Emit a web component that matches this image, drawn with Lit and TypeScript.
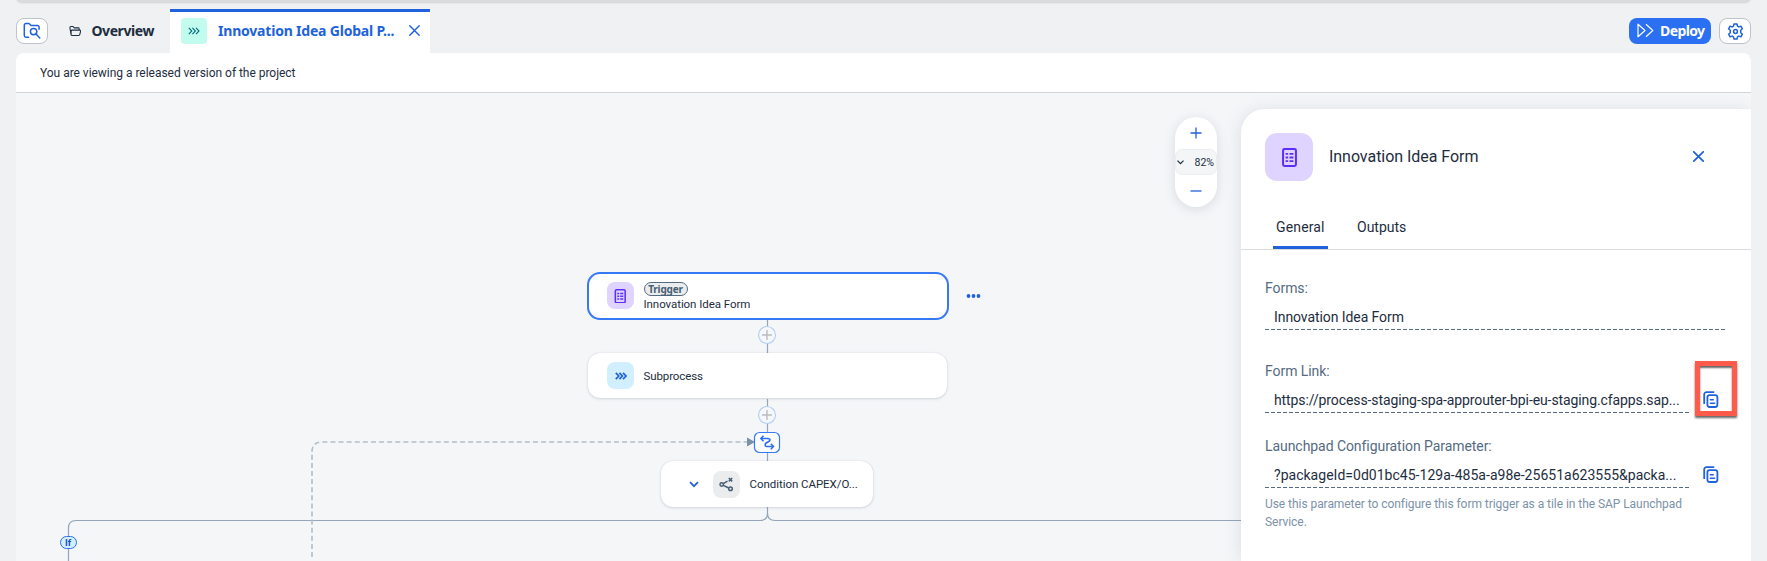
import { LitElement, html, css, svg } from "lit";
import { customElement } from "lit/decorators.js";

const formGlyph = (size: number) => html`<svg width=${size} height=${size} viewBox="0 0 18 18" fill="none" stroke="#5b2eff">
  <rect x="2.9" y="1" width="12.2" height="16" rx="1.4" stroke-width="1.9"/>
  <path d="M5.3 5.6h2.4M5.3 9h2.4M5.3 12.4h2.4M9 5.6h3.7M9 9h3.7M9 12.4h3.7" stroke-width="1.7"/>
</svg>`;
const chevrons = (w: number, sw: number) => html`<svg width=${w} height="8" viewBox="0 0 12 8" fill="none" stroke="currentColor" stroke-width=${sw}>
  <path d="M.8.8 3.8 4 .8 7.2M4.4.8 7.4 4 4.4 7.2M8 .8 11 4 8 7.2"/>
</svg>`;
const copyGlyph = html`<svg width="16" height="17" viewBox="0 0 16 17" fill="none" stroke="#2062dc" stroke-width="1.8" stroke-linecap="round">
  <path d="M1.2 12.2V3.4A2.3 2.3 0 0 1 3.5 1.1H10.6"/>
  <rect x="4.4" y="4.2" width="10" height="11.8" rx="2.2"/>
  <path d="M7.4 8.7h2.8M7.4 12.2h4.200" stroke-width="1.6"/>
</svg>`;
const cross = (s: number, w: number) => html`<svg width=${s} height=${s} viewBox="0 0 10 10" stroke="#2062dc" stroke-width=${w} stroke-linecap="round"><path d="M.7.7 9.3 9.3M9.3.7.7 9.3"/></svg>`;

@customElement("app-toolbar")
class AppToolbar extends LitElement {
  static styles = css`
    :host { display: block; }
    .bar { display: flex; height: 44px; padding: 9px 16px 0; font: 700 14px "Noto Sans", sans-serif; color: #1d2d3e; }
    .btn { display: flex; align-items: center; justify-content: center; box-sizing: border-box; width: 32px; height: 26px; margin-top: 9px; background: #fff; border: 1px solid #bcc3ca; border-radius: 8px; }
    .tab { display: flex; align-items: center; height: 44px; white-space: nowrap; }
    .overview { padding: 0 16px 1px 21px; gap: 9px; box-sizing: border-box; width: 122px; letter-spacing: -.42px; }
    .overview span { padding-left: 1px; }
    .active { box-sizing: border-box; width: 260px; padding: 0 10px 4px 11px; background: #fff; border-top: 3px solid #2062dc; color: #2062dc; letter-spacing: -.2px; }
    .badge { display: flex; align-items: center; justify-content: center; width: 26px; height: 26px; background: #c2fcee; border-radius: 4px; color: #046c7a; margin-right: 11px; }
    .name { width: 179px; margin-right: 12px; }
    .space { flex: 1; }
    .deploy { display: flex; align-items: center; box-sizing: border-box; width: 82px; height: 26px; margin: 9px 8px 0 0; padding: 0 0 1px 8px; gap: 6px; color: #fff; background: #2b6ff2; border-radius: 8px; letter-spacing: -.6px; }
  `;
  render() {
    return html`<div class="bar">
      <div class="btn"><svg width="18" height="18" viewBox="0 0 18 18" fill="none" stroke="#2062dc" stroke-width="1.5" stroke-linecap="round" stroke-linejoin="round">
        <path d="M5.6 15.2H3A1.7 1.7 0 0 1 1.3 13.5V3.2A1.7 1.7 0 0 1 3 1.5H6l2 2h6.4a1.7 1.7 0 0 1 1.7 1.7V7.3"/><circle cx="10.6" cy="9.6" r="3.2"/><path d="M13 12l3.8 4"/></svg></div>
      <div class="tab overview"><svg width="14" height="12" viewBox="0 0 14 12" fill="none" stroke="#1d2d3e" stroke-width="1.2" stroke-linejoin="round">
        <path d="M2.4 10.5 1 2.2Q1 1 2 1H4.6L6 2.5H10.6Q11.4 2.5 11.4 3.3V5M2.4 10.5Q2.6 11 3.4 11H11Q11.9 11 12.1 10.2L13.2 5.9Q13.3 5 12.4 5H3.4Q2.5 5 2.4 6Z"/></svg><span>Overview</span></div>
      <div class="tab active"><span class="badge">${chevrons(12, 1.1)}</span><span class="name">Innovation Idea Global P...</span>${cross(11, 1.3)}</div>
      <div class="space"></div>
      <div class="deploy"><svg width="17" height="15" viewBox="0 0 17 15" fill="none" stroke="#fff" stroke-width="1.2" stroke-linejoin="round"><path d="M1 1.2V13.8L8 7.5ZM9 1.2 15.8 7.5 9 13.8"/></svg><span>Deploy</span></div>
      <div class="btn"><svg width="17" height="17" viewBox="0 0 17 17" fill="none" stroke="#2062dc" stroke-width="1.5" stroke-linejoin="round">
        <path d="M7 1h3l.5 2.2 1.200.7 2.200-.7 1.500 2.600-1.700 1.500v2.400l1.700 1.500-1.500 2.600-2.200-.7-1.200.7L10 16H7l-.5-2.200-1.200-.7-2.200.7-1.500-2.600 1.700-1.500V7.300L1.600 5.800 3.100 3.200l2.200.7 1.200-.7Z"/><circle cx="8.500" cy="8.500" r="1.900"/></svg></div>
    </div>`;
  }
}

@customElement("flow-canvas")
class FlowCanvas extends LitElement {
  static styles = css`
    :host { display: block; position: absolute; inset: 0; font: 11.5px Roboto, sans-serif; color: #1d2d3e; white-space: nowrap; }
    .wires { position: absolute; left: 0; top: 0; }
    .node { position: absolute; display: flex; align-items: center; box-sizing: border-box; background: #fff; border-radius: 12px; box-shadow: 0 0 1px #8a99aa70, 0 1px 3px #556b8235; }
    .trigger { left: 570.5px; top: 178.5px; width: 362.5px; height: 48.5px; border: 2px solid #3579f3; border-radius: 13px; box-shadow: none; padding-left: 18.5px; gap: 9.5px; }
    .sub { left: 572px; top: 260px; width: 359px; height: 45px; padding-left: 19px; gap: 9.5px; letter-spacing: -.1px; }
    .cond { left: 645px; top: 368px; width: 212px; height: 46px; padding-left: 27.5px; letter-spacing: -.05px; }
    .cond .ico { margin: 0 10px 0 14px; }
    .ico { display: flex; align-items: center; justify-content: center; width: 27px; height: 27px; border-radius: 8px; }
    .purple { background: #dfd3ff; }
    .blue { background: #d1efff; color: #2062dc; }
    .gray { background: #eaecee; }
    .stack { display: flex; flex-direction: column; align-items: flex-start; gap: 1px; padding-top: 1px; line-height: 14px; letter-spacing: -.06px; }
    .tag { box-sizing: border-box; height: 14px; width: 44px; text-align: center; border: 1px solid #556b81; border-radius: 7px; background: #eaecee; color: #475e75; font: 700 10px/12px "Noto Sans", sans-serif; letter-spacing: -.2px; }
    .if { position: absolute; left: 43.5px; top: 443px; box-sizing: border-box; width: 17px; height: 13px; border: 1px solid #2f70e6; border-radius: 6.5px; background: #d1efff; color: #1550c0; font: 700 9.5px/11px Roboto, sans-serif; text-align: center; }
    .zoom { position: absolute; left: 1159px; top: 24px; width: 42px; height: 90px; display: flex; flex-direction: column; align-items: center; background: #fff; border-radius: 21px; box-shadow: 0 2px 12px #556b8230; }
    .zb { flex: 1; display: flex; align-items: center; }
    .pct { box-sizing: border-box; width: 42px; height: 26px; display: flex; align-items: center; justify-content: space-between; padding: 1px 2px 0 1px; background: #f4f5f6; border: 1px solid #eceef0; border-radius: 7px; font-size: 10.5px; }
  `;
  plus(y: number) {
    return svg`<circle cx="751" cy=${y} r="8.5" fill="#f5f7fa" stroke="#b5cffb" stroke-width="1.2"/><path d=${`M746 ${y}h10M751 ${y - 5}v10`} stroke="#b9bdc2" stroke-width="1.4"/>`;
  }
  render() {
    return html`
      <svg class="wires" width="1225" height="468" fill="none">
        <g stroke="#94a5b9" stroke-width="1.2">
          <path d="M751.5 227V260M751.5 306V368M751.5 414V420Q751.5 427.5 744 427.5H60Q52.5 427.5 52.5 435V468M751.5 420Q751.5 427.5 759 427.5H1225"/>
        </g>
        <path d="M296 464V359Q296 349 306 349H731" stroke="#b3c0cf" stroke-width="1.7" stroke-dasharray="5 3.1"/>
        <path d="M731 344.5 739 349 731 353.5Z" fill="#7b91a8"/>
        ${this.plus(242)}${this.plus(322)}
        <rect x="738.5" y="339.5" width="25" height="20" rx="5" fill="#fff" stroke="#3579f3" stroke-width="1.2"/>
        <g stroke="#2a6df0" stroke-width="1.6" stroke-linejoin="round"><path d="M745.5 345.5H751.5Q755 345.5 753.5 348L749.5 350.5Q748.500 353.500 751 353.500H757"/><path d="M747.500 342.800 744.800 345.500 747.500 348.200M754.800 350.800 757.500 353.500 754.800 356.200"/></g>
        <g fill="#2062dc"><circle cx="952.5" cy="203" r="1.9"/><circle cx="957.5" cy="203" r="1.9"/><circle cx="962.5" cy="203" r="1.9"/></g>
      </svg>
      <div class="node trigger"><span class="ico purple">${formGlyph(14.5)}</span><div class="stack"><span class="tag">Trigger</span><span>Innovation Idea Form</span></div></div>
      <div class="node sub"><span class="ico blue">${chevrons(12, 1.7)}</span><span>Subprocess</span></div>
      <div class="node cond">
        <svg width="10" height="7" viewBox="0 0 10 7" fill="none" stroke="#2062dc" stroke-width="1.7"><path d="M1 1.2 5 5.2 9 1.2"/></svg>
        <span class="ico gray"><svg width="15" height="15" viewBox="0 0 15 15" fill="none" stroke="#475e75" stroke-width="1.5"><circle cx="2.7" cy="7.5" r="1.7"/><circle cx="11.5" cy="11.8" r="1.8"/><path d="M4.3 6.7 8.5 4.2M4.3 8.3 9.8 11M9.8 1 13.2 4.4M13.2 1 9.8 4.4"/></svg></span>
        <span>Condition CAPEX/O...</span></div>
      <span class="if">If</span>
      <div class="zoom">
        <div class="zb"><svg width="12" height="12" viewBox="0 0 12 12" stroke="#2062dc" stroke-width="1.3"><path d="M.5 6h11M6 .5v11"/></svg></div>
        <div class="pct"><svg width="7" height="5" viewBox="0 0 7 5" fill="none" stroke="#1d2d3e" stroke-width="1.2"><path d="M.5.7 3.5 3.7 6.5.7"/></svg><span>82%</span></div>
        <div class="zb"><svg width="12" height="12" viewBox="0 0 12 12" stroke="#2062dc" stroke-width="1.3"><path d="M.5 6h11"/></svg></div>
      </div>`;
  }
}

@customElement("detail-panel")
class DetailPanel extends LitElement {
  static styles = css`
    :host { display: block; position: relative; box-sizing: border-box; width: 510px; height: 452px; background: #fff; border-top-left-radius: 24px; box-shadow: -2px 0 16px #556b8222; font: 14px Roboto, sans-serif; color: #1d2d3e; white-space: nowrap; }
    .head { display: flex; align-items: center; height: 48px; padding: 24px 47px 0 24px; }
    .head > svg { margin-bottom: 2px; }
    .ico { width: 48px; height: 48px; border-radius: 12px; background: #dfd3ff; display: flex; align-items: center; justify-content: center; }
    .title { flex: 1; font-size: 16px; margin-left: 16px; padding-bottom: 2px; letter-spacing: -.04px; }
    .tabs { display: flex; box-sizing: border-box; height: 69px; padding: 21px 32px 0; gap: 26px; border-bottom: 1px solid #d9dbdd; }
    .tabs span { box-sizing: border-box; height: 47px; padding: 15px 3px 0; line-height: 20px; border-bottom: 3px solid transparent; }
    .tabs .on { width: 55px; border-color: #2062dc; border-radius: 2px 2px 0 0; letter-spacing: .15px; }
    .body { padding: 28px 24px 0; }
    .label { color: #556b82; line-height: 20px; letter-spacing: -.06px; }
    .row { display: flex; align-items: center; height: 32px; margin-top: 3px; }
    .value { box-sizing: border-box; width: 424px; height: 32px; line-height: 32px; padding-left: 9px; letter-spacing: .02px; background: repeating-linear-gradient(90deg, #556b82 0 4px, transparent 4px 6px) 0 28px / 100% 1px no-repeat; }
    .wide { width: 460px; letter-spacing: -.08px; }
    .url { letter-spacing: -.1px; }
    .copy { display: flex; margin: 0 0 1px 14px; }
    .g1 { margin-top: 28px; }
    .g2 { margin-top: 20px; }
    .help { font-size: 12px; line-height: 18px; color: #7c92a9; margin-top: 4px; letter-spacing: -.055px; }
    .mark { position: absolute; left: 454px; top: 252px; box-sizing: border-box; width: 42px; height: 55px; border: 5px solid #ff5a4a; box-shadow: 0 2px 2px #0009, inset 0 2px 2px #0009; }
  `;
  render() {
    return html`
      <div class="head"><span class="ico">${formGlyph(19)}</span><span class="title">Innovation Idea Form</span>${cross(11, 1.6)}</div>
      <div class="tabs"><span class="on">General</span><span>Outputs</span></div>
      <div class="body">
        <div class="label">Forms:</div>
        <div class="row"><div class="value wide">Innovation Idea Form</div></div>
        <div class="label g1">Form Link:</div>
        <div class="row"><div class="value url">https://process-staging-spa-approuter-bpi-eu-staging.cfapps.sap...</div><span class="copy">${copyGlyph}</span></div>
        <div class="label g2">Launchpad Configuration Parameter:</div>
        <div class="row"><div class="value">?packageId=0d01bc45-129a-485a-a98e-25651a623555&amp;packa...</div><span class="copy">${copyGlyph}</span></div>
        <div class="help">Use this parameter to configure this form trigger as a tile in the SAP Launchpad<br>Service.</div>
      </div>
      <div class="mark"></div>`;
  }
}

@customElement("app-root")
class AppRoot extends LitElement {
  static styles = css`
    :host { display: block; box-sizing: border-box; height: 561px; overflow: hidden; background: #eff1f3; position: relative; }
    .shell { position: absolute; left: 16px; right: 16px; top: -8px; height: 10px; background: #d9dbdd; border-radius: 0 0 6px 6px; box-shadow: 0 1px 2px #0002; }
    .note { box-sizing: border-box; height: 40px; margin: 0 16px; padding: 0 24px; font: 12px/40px Roboto, sans-serif; letter-spacing: -.03px; color: #1d2d3e; background: #fff; border-bottom: 1px solid #d3d6d9; border-radius: 8px 8px 0 0; }
    .work { position: relative; display: flex; justify-content: flex-end; align-items: flex-end; height: 468px; margin: 0 16px; overflow: hidden; background: #f5f6f8; }
  `;
  render() {
    return html`<div class="shell"></div><app-toolbar></app-toolbar>
      <div class="note">You are viewing a released version of the project</div>
      <div class="work"><flow-canvas></flow-canvas><detail-panel></detail-panel></div>`;
  }
}
